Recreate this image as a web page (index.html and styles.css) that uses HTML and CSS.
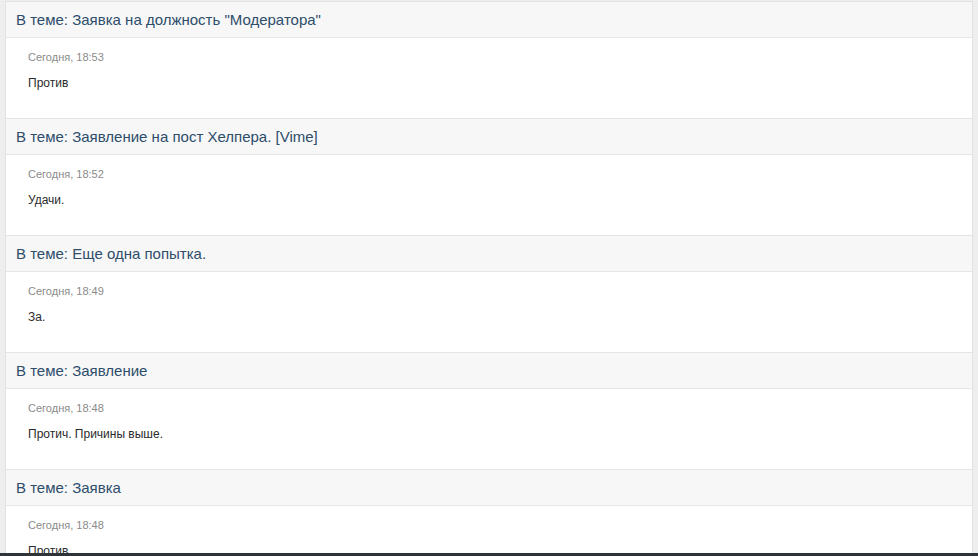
FILE: index.html
```html
<!DOCTYPE html>
<html lang="ru">
<head>
<meta charset="utf-8">
<title>Сообщения</title>
<link rel="stylesheet" href="styles.css">
</head>
<body>
<div class="page">
  <div class="list">
    <div class="item">
      <div class="item-head">В теме: Заявка на должность "Модератора"</div>
      <div class="item-body">
        <div class="date">Сегодня, 18:53</div>
        <div class="text">Против</div>
      </div>
    </div>
    <div class="item">
      <div class="item-head">В теме: Заявление на пост Хелпера. [Vime]</div>
      <div class="item-body">
        <div class="date">Сегодня, 18:52</div>
        <div class="text">Удачи.</div>
      </div>
    </div>
    <div class="item">
      <div class="item-head">В теме: Еще одна попытка.</div>
      <div class="item-body">
        <div class="date">Сегодня, 18:49</div>
        <div class="text">За.</div>
      </div>
    </div>
    <div class="item">
      <div class="item-head">В теме: Заявление</div>
      <div class="item-body">
        <div class="date">Сегодня, 18:48</div>
        <div class="text">Протич. Причины выше.</div>
      </div>
    </div>
    <div class="item">
      <div class="item-head">В теме: Заявка</div>
      <div class="item-body">
        <div class="date">Сегодня, 18:48</div>
        <div class="text">Против.</div>
      </div>
    </div>
  </div>
</div>
<div class="bottom-bar"></div>
</body>
</html>
```
FILE: styles.css
```css
html, body {
  margin: 0;
  padding: 0;
}
body {
  background: #eeeeee;
  font-family: "Liberation Sans", Arial, sans-serif;
  overflow: hidden;
}
.page {
  padding: 1px 5px 0 5px;
}
.list {
  background: #ffffff;
  border: 1px solid #e2e2e2;
  border-bottom: none;
}
.item {
  border-bottom: 1px solid #e4e4e4;
}
.item-head {
  height: 35px;
  background: #f7f7f7;
  border-bottom: 1px solid #e6e6e6;
  display: flex;
  align-items: center;
  padding-left: 10px;
  font-size: 15px;
  color: #2d4d6b;
}
.item-body {
  height: 80px;
  padding: 13px 22px 0 22px;
  box-sizing: border-box;
}
.date {
  font-size: 11px;
  color: #8a8a8a;
  line-height: 13px;
}
.text {
  margin-top: 12px;
  font-size: 12px;
  color: #2a2a2a;
  line-height: 14px;
}
.bottom-bar {
  position: fixed;
  left: 0;
  right: 0;
  bottom: 0;
  height: 3px;
  background: #2e3439;
}
```
